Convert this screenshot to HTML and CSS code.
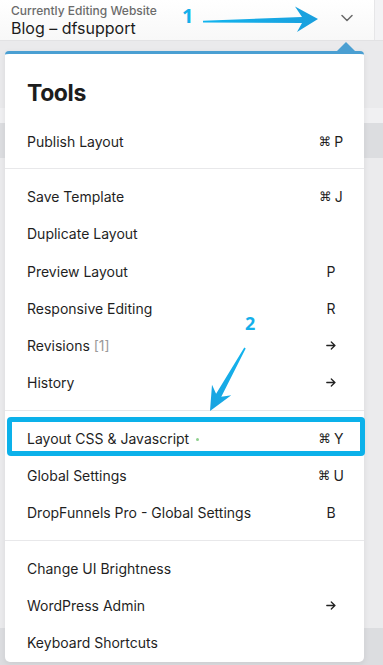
FILE: index.html
```html
<!DOCTYPE html>
<html>
<head>
<meta charset="utf-8">
<link rel="stylesheet" href="styles.css">
</head>
<body>
<header class="topbar">
  <div class="site">
    <div class="site-label">Currently Editing Website</div>
    <div class="site-name">Blog – dfsupport</div>
  </div>
  <div class="toggle">
    <svg width="12" height="8" viewBox="0 0 12 8"><path d="M1 1.5 L6 6.5 L11 1.5" fill="none" stroke="#6a6a6a" stroke-width="1.5" stroke-linecap="round" stroke-linejoin="round"/></svg>
  </div>
  <div class="topbar-end"></div>
</header>
<main class="canvas">
  <div class="band band-a"></div>
  <div class="band band-b"></div>
  <div class="band band-c"></div>
  <div class="band band-d"></div>
  <div class="band band-e"></div>
</main>

<nav class="menu">
  <h2 class="menu-title">Tools</h2>
  <ul class="group">
    <li class="row"><span>Publish Layout</span><span class="key"><span class="cmd">⌘</span>P</span></li>
  </ul>
  <ul class="group">
    <li class="row"><span>Save Template</span><span class="key"><span class="cmd">⌘</span>J</span></li>
    <li class="row"><span>Duplicate Layout</span><span class="key"></span></li>
    <li class="row"><span>Preview Layout</span><span class="key">P</span></li>
    <li class="row"><span>Responsive Editing</span><span class="key">R</span></li>
    <li class="row"><span>Revisions <span class="muted">[1]</span></span><span class="key"><svg class="arrow" width="10" height="9" viewBox="0 0 10 9"><path d="M0.8 4.5 H9 M5.3 1 L8.9 4.5 L5.3 8" fill="none" stroke="#222" stroke-width="1.3" stroke-linecap="round" stroke-linejoin="round"/></svg></span></li>
    <li class="row"><span>History</span><span class="key"><svg class="arrow" width="10" height="9" viewBox="0 0 10 9"><path d="M0.8 4.5 H9 M5.3 1 L8.9 4.5 L5.3 8" fill="none" stroke="#222" stroke-width="1.3" stroke-linecap="round" stroke-linejoin="round"/></svg></span></li>
  </ul>
  <ul class="group">
    <li class="row row-marked"><span>Layout CSS &amp; Javascript <span class="dot"></span></span><span class="key"><span class="cmd">⌘</span>Y</span></li>
    <li class="row"><span>Global Settings</span><span class="key"><span class="cmd">⌘</span>U</span></li>
    <li class="row"><span>DropFunnels Pro - Global Settings</span><span class="key">B</span></li>
  </ul>
  <ul class="group group-last">
    <li class="row"><span>Change UI Brightness</span><span class="key"></span></li>
    <li class="row"><span>WordPress Admin</span><span class="key"><svg class="arrow" width="10" height="9" viewBox="0 0 10 9"><path d="M0.8 4.5 H9 M5.3 1 L8.9 4.5 L5.3 8" fill="none" stroke="#222" stroke-width="1.3" stroke-linecap="round" stroke-linejoin="round"/></svg></span></li>
    <li class="row"><span>Keyboard Shortcuts</span><span class="key"></span></li>
  </ul>
</nav>

<svg class="marks" width="383" height="665" viewBox="0 0 383 665">
  <defs>
    <linearGradient id="g1" x1="0" y1="0" x2="1" y2="0">
      <stop offset="0" stop-color="#12b4ee"/>
      <stop offset="1" stop-color="#1a9fdd"/>
    </linearGradient>
    <linearGradient id="g2" x1="1" y1="0" x2="0" y2="1">
      <stop offset="0" stop-color="#12b4ee"/>
      <stop offset="1" stop-color="#1aa3e0"/>
    </linearGradient>
  </defs>
  <polygon fill="url(#g1)" points="203,20.8 302,17 295,6.5 318,19 297,32 302,23 203,22.6"/>
  <polygon fill="url(#g2)" points="244.3,347.6 245.7,348.4 221.3,396.8 231.3,395.3 210,411 212,384.7 216.1,393.8"/>
</svg>
<span class="note note-1">1</span>
<span class="note note-2">2</span>
</body>
</html>
```
FILE: styles.css
```css
* { box-sizing: border-box; }
html, body { margin: 0; padding: 0; }
body {
  width: 383px;
  height: 665px;
  overflow: hidden;
  position: relative;
  background: #ebebed;
  font-family: Inter, "Liberation Sans", sans-serif;
  color: #1f1f1f;
}
.topbar {
  height: 41px;
  display: flex;
  align-items: center;
  background: linear-gradient(#ffffff, #f8f8f8);
  border-bottom: 1px solid #e2e2e4;
}
.site {
  flex: 1;
  padding-left: 11px;
  padding-top: 1px;
}
.site-label {
  font-size: 12px;
  font-weight: 500;
  color: #6b6b6b;
  line-height: 13px;
}
.site-name {
  font-size: 16px;
  line-height: 20px;
  color: #1c1c1c;
  margin-top: 1px;
}
.toggle {
  width: 54px;
  display: flex;
  justify-content: center;
  padding-bottom: 4px;
}
.topbar-end {
  width: 9px;
  align-self: stretch;
  border-left: 1px solid #e6e6e8;
  background: #f3f3f5;
}
.canvas { display: flex; flex-direction: column; }
.band-a { height: 67px; background: #eaeaec; }
.band-b { height: 15px; background: #f0f0f2; }
.band-c { height: 35px; background: #dcdde0; }
.band-d { height: 470px; background: #ebebed; }
.band-e { height: 37px; background: #dcdde0; }

.menu {
  position: absolute;
  left: 5px;
  top: 51px;
  width: 359px;
  height: 611px;
  background: #fff;
  border-top: 3px solid #4a9fd2;
  border-radius: 4px 4px 5px 5px;
  box-shadow: 0 2px 6px rgba(0,0,0,0.08);
}
.menu::before {
  content: "";
  position: absolute;
  left: 331px;
  top: -12px;
  border-left: 10.5px solid transparent;
  border-right: 10.5px solid transparent;
  border-bottom: 10px solid #4a9fd2;
}
.menu-title {
  margin: 0;
  padding: 25px 0 7px 22px;
  font-size: 23px;
  line-height: 28px;
  font-weight: 700;
  letter-spacing: -0.4px;
  color: #1d1d1d;
}
.group {
  list-style: none;
  margin: 0;
  padding: 8.5px 0;
  border-bottom: 1px solid #e8e8ea;
}
.group-last { border-bottom: 0; padding-bottom: 0; }
.row {
  height: 37.3px;
  display: flex;
  align-items: center;
  justify-content: space-between;
  padding: 0 13px 0 22px;
  font-size: 14px;
  position: relative;
}
.key {
  width: 40px;
  display: flex;
  justify-content: center;
  align-items: center;
  font-size: 14px;
  color: #1f1f1f;
}
.cmd {
  font-family: "DejaVu Sans", sans-serif;
  font-size: 12.5px;
  margin-right: 3px;
}
.arrow { display: block; }
.muted { color: #9a9a9a; }
.dot {
  display: inline-block;
  width: 3px;
  height: 3px;
  border-radius: 50%;
  background: #8fd08f;
  vertical-align: middle;
  margin-left: 3px;
}
.row-marked::after {
  content: "";
  position: absolute;
  left: 2px;
  right: -1px;
  top: -3px;
  bottom: 1px;
  border: 5px solid #0cb1ea;
  border-radius: 4px;
}
.marks {
  position: absolute;
  left: 0;
  top: 0;
  pointer-events: none;
}
.note {
  position: absolute;
  font-family: "Open Sans", "Liberation Sans", sans-serif;
  font-weight: 700;
  color: #14afea;
  line-height: 1;
}
.note-1 { left: 182px; top: 6px; font-size: 20px; }
.note-2 { left: 245px; top: 314px; font-size: 18px; }
```
